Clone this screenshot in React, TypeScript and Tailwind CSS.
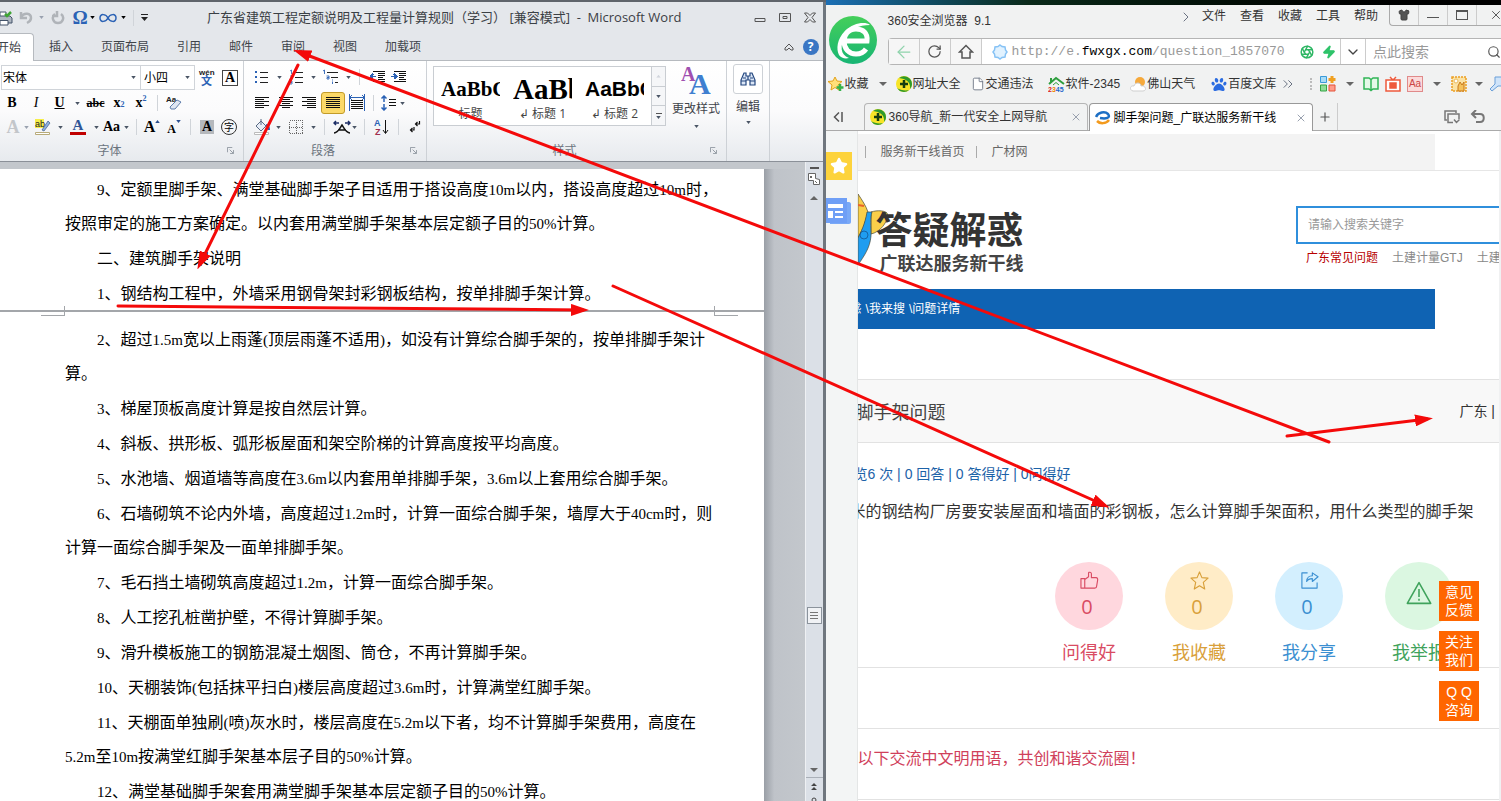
import React from 'react';
import clsx from 'clsx';
import {
  ArrowLeft,
  ChevronDown,
  ChevronRight,
  ChevronsRight,
  Plus,
  RotateCw,
  Search,
  Shirt,
  Star,
  X,
  Zap,
  Aperture,
  File,
} from 'lucide-react';
import { FaPaw } from 'react-icons/fa';

const Caret = ({ className = 'text-gray-600' }: { className?: string }) => (
  <svg viewBox="0 0 6 4" className={clsx('h-[3px] w-[5px] shrink-0', className)} fill="currentColor">
    <path d="M0 0h6L3 4z" />
  </svg>
);

const BigCaret = ({ className }: { className?: string }) => (
  <svg viewBox="0 0 8 4" className={clsx('h-1 w-2 shrink-0', className)} fill="#666">
    <path d="M0 0h8L4 4z" />
  </svg>
);

const Sep = ({ className = 'w-[10px]' }: { className?: string }) => (
  <span className={clsx('flex shrink-0 justify-center', className)}>
    <span className="h-4 w-px bg-[#d0d4d9]" />
  </span>
);

type ToolProps = { label: string; className?: string; children: React.ReactNode };

const Tool = ({ label, className = 'w-6', children }: ToolProps) => (
  <button type="button" aria-label={label} className={clsx('flex h-[22px] shrink-0 items-center justify-center', className)}>
    {children}
  </button>
);

const Lines = ({ rows }: { rows: [number, number][] }) => (
  <svg viewBox="0 0 16 16" className="h-4 w-4" stroke="#111" strokeWidth="1" shapeRendering="crispEdges">
    {rows.map(([a, b], i) => (
      <path key={i} d={`M${a} ${2.5 + i * 2}H${b}`} />
    ))}
  </svg>
);

const Launcher = () => (
  <svg viewBox="0 0 8 8" className="h-[7px] w-[7px]" fill="none" stroke="#8a929b">
    <path d="M.5 6V.5H6M3 3l4 4M7.500 3.500v4h-4" />
  </svg>
);

/* ---------- Word window ---------- */

const WordTitleBar = () => (
  <div className="flex h-[31px] items-center">
    <div className="flex w-[207px] items-center">
      <Tool label="打印" className="w-[13px]">
        <svg viewBox="0 0 13 16" className="h-4 w-[13px]" fill="none" stroke="#44546a">
          <path d="M0 6V2h6v4" fill="#fff" />
          <path d="M-2 6h12l2 2v5H-2z" fill="#aeb6c0" />
          <path d="M0 10.500h8v4.500H0z" fill="#fff" />
          <path d="M5 4l2 2 4-4" stroke="#3fa535" strokeWidth="2.500" />
        </svg>
      </Tool>
      <Tool label="撤消" className="w-[26px]">
        <svg viewBox="0 0 14 14" className="h-[14px] w-[14px]" fill="none" stroke="#b0b4b9" strokeWidth="2.500">
          <path d="M2 1v6h6M2 6c3-5 10-4 10 1 0 2-2 4-4 5" />
        </svg>
      </Tool>
      <Caret className="text-gray-400" />
      <Tool label="重复" className="w-[28px]">
        <svg viewBox="0 0 14 14" className="h-[14px] w-[14px]" fill="none" stroke="#b0b4b9" strokeWidth="2.500">
          <path d="M4 3C0 6 2 12 7 12s7-6 3-9M6 0v5H1" />
        </svg>
      </Tool>
      <Tool label="符号" className="w-[16px]">
        <span className="font-[Liberation_Serif] text-[19px] leading-none font-bold text-[#2b62b5]">Ω</span>
      </Tool>
      <Caret className="ml-[2px] text-black" />
      <Tool label="公式" className="w-[26px]">
        <svg viewBox="0 0 18 10" className="h-[10px] w-[18px]" fill="none" stroke="#2b62b5" strokeWidth="1.500">
          <path d="M9 5C7 1 1 0 1 5s6 4 8 0 8-5 8 0-6 4-8 0z" />
        </svg>
      </Tool>
      <Caret className="text-black" />
      <Sep className="w-[14px]" />
      <Tool label="自定义快速访问工具栏" className="w-2">
        <svg viewBox="0 0 7 7" className="h-[7px] w-[7px]">
          <path d="M0 .5h7" stroke="#222" />
          <path d="M0 3h7L3.500 7z" fill="#222" />
        </svg>
      </Tool>
    </div>
    <h1 className="flex-1 truncate text-[13px] text-[#3b4045]">
      广东省建筑工程定额说明及工程量计算规则（学习） [兼容模式]&nbsp; -&nbsp; Microsoft Word
    </h1>
    <div className="flex items-center gap-[13px] pr-[7px]">
      <button type="button" aria-label="最小化">
        <svg viewBox="0 0 12 12" className="h-3 w-3" fill="none" stroke="#555">
          <path d="M1 6.500h10v3H1z" />
        </svg>
      </button>
      <button type="button" aria-label="还原">
        <svg viewBox="0 0 12 12" className="h-3 w-3" fill="none" stroke="#555">
          <path d="M.5 1.500h11v8H.5zM4 4.500h4v2H4z" />
        </svg>
      </button>
      <button type="button" aria-label="关闭">
        <svg viewBox="0 0 12 12" className="h-3 w-3" fill="none" stroke="#555">
          <path d="M.5 1h3L6 3.500 8.500 1h3L8 5.500l3.500 4.500h-3L6 7.500 3.500 10h-3L4 5.500z" />
        </svg>
      </button>
    </div>
  </div>
);

const ribbonTabs = ['插入', '页面布局', '引用', '邮件', '审阅', '视图', '加载项'];

const WordTabs = () => (
  <nav className="flex h-[28px] border-b border-[#b6babf] text-xs text-[#3f444a]">
    <button type="button" className="-mb-px flex w-[34px] items-center justify-end rounded-tr border-t border-r border-[#b6babf] bg-white pr-3 whitespace-nowrap">
      开始
    </button>
    <div className="flex flex-1 gap-7 pl-[15px]">
      {ribbonTabs.map((t) => (
        <button type="button" key={t}>{t}</button>
      ))}
    </div>
    <div className="flex items-center gap-[9px] pr-1">
      <button type="button" aria-label="功能区最小化">
        <svg viewBox="0 0 10 8" className="h-2 w-[10px]" fill="none" stroke="#555">
          <path d="M1 5l4-4 4 4v2H7L5 5 3 7H1z" />
        </svg>
      </button>
      <button type="button" aria-label="帮助" className="h-4 w-4 rounded-full bg-[#3a76c4] text-xs leading-4 font-bold text-white">?</button>
    </div>
  </nav>
);

type GroupProps = { title?: string; launcher?: boolean; className?: string; children: React.ReactNode };

const Group = ({ title, launcher, className, children }: GroupProps) => (
  <section className={clsx('flex shrink-0 flex-col border-r border-[#cdd1d6]', className)}>
    <div className="flex-1">{children}</div>
    <div className="grid h-[21px] grid-cols-[1fr_16px] items-center text-xs text-[#6b747e]">
      <span className="pr-2 text-center">{title}</span>
      {launcher && <Launcher />}
    </div>
  </section>
);

const FontGroup = () => (
  <Group title="字体" launcher className="w-[244px]">
    <div className="flex items-center pt-[4px]">
      <label className="ml-px flex h-[25px] w-[140px] items-center border border-[#d0d4d9] bg-white pr-[4px]">
        <select aria-label="字体" className="min-w-0 flex-1 appearance-none bg-transparent pl-px text-xs">
          <option>宋体</option>
        </select>
        <Caret />
      </label>
      <label className="-ml-px flex h-[25px] w-[55px] items-center border border-[#d0d4d9] bg-white pr-[4px]">
        <select aria-label="字号" className="min-w-0 flex-1 appearance-none bg-transparent pl-[3px] text-xs">
          <option>小四</option>
        </select>
        <Caret />
      </label>
      <Tool label="拼音指南" className="ml-px w-[22px]">
        <svg viewBox="0 0 18 20" className="h-5 w-[18px]" fontWeight="bold">
          <text x="1" y="7" fontSize="8" fontFamily="Liberation Sans" fill="#222">wén</text>
          <text x="3" y="17" fontSize="11" fontFamily="Noto Sans CJK SC" fill="#2b62b5">文</text>
        </svg>
      </Tool>
      <Tool label="字符边框" className="w-[24px]">
        <span className="h-4 w-4 border border-[#444] text-center font-[Liberation_Serif] text-sm leading-[14px] font-bold">A</span>
      </Tool>
    </div>
    <div className="flex items-center pt-[2px] font-[Liberation_Serif] text-sm font-bold">
      <Tool label="加粗" className="w-6">B</Tool>
      <Tool label="倾斜" className="w-6"><i className="font-normal">I</i></Tool>
      <Tool label="下划线" className="w-[23px]"><u>U</u></Tool>
      <Tool label="下划线样式" className="w-3"><Caret /></Tool>
      <Tool label="删除线" className="w-[25px]"><s className="text-xs">abc</s></Tool>
      <Tool label="下标" className="w-[22px]">x<sub className="text-[8px] text-[#2b62b5]">2</sub></Tool>
      <Tool label="上标" className="w-[22px]">x<sup className="text-[8px] text-[#2b62b5]">2</sup></Tool>
      <Sep />
      <Tool label="清除格式" className="w-6">
        <svg viewBox="0 0 18 16" className="h-4 w-[18px]">
          <text x="1" y="7" fontSize="8" fontFamily="Liberation Sans" fill="#222">Aa</text>
          <path d="M5 12l7-7 4 2-6 7H6z" fill="#dfe6f2" stroke="#5f7dab" />
        </svg>
      </Tool>
    </div>
    <div className="flex items-center pt-[2px] font-[Liberation_Serif] text-sm font-bold">
      <Tool label="文本效果" className="w-[22px]"><span className="pl-1 text-lg text-[#c3c6ca]">A</span></Tool>
      <Tool label="文本效果选项" className="w-[8px]"><Caret className="text-gray-400" /></Tool>
      <Tool label="突出显示" className="w-[26px]">
        <svg viewBox="0 0 18 18" className="h-[18px] w-[18px]">
          <path d="M1 1h9v9H1z" fill="#f6ee4a" />
          <text x="1" y="9" fontSize="9" fontFamily="Liberation Sans" fontWeight="normal" fill="#222">ab</text>
          <path d="M8 12l6-9 2 2-6 8z" fill="#8fb0de" stroke="#3d5c8c" strokeWidth=".7" />
          <path d="M1.500 14.500h14v2h-14z" fill="#fff" stroke="#b8ab7a" />
        </svg>
      </Tool>
      <Tool label="突出显示选项" className="w-[8px]"><Caret /></Tool>
      <Tool label="字体颜色" className="w-[28px]">
        <span className="flex flex-col items-center text-[15px] leading-[13px] text-[#2f5597]">
          A<span className="h-[3px] w-4 bg-[#c00000]" />
        </span>
      </Tool>
      <Tool label="字体颜色选项" className="w-[8px]"><Caret /></Tool>
      <Tool label="更改大小写" className="w-[32px]"><span className="pr-1">Aa</span><Caret /></Tool>
      <Sep className="w-[9px]" />
      <Tool label="增大字体" className="w-[22px]">
        <span className="text-base">A</span>
        <Caret className="mb-3 rotate-180 text-[#2b4f8f]" />
      </Tool>
      <Tool label="缩小字体" className="w-[22px]">
        <span className="pt-1 text-xs">A</span>
        <Caret className="mb-3 text-[#2b4f8f]" />
      </Tool>
      <Sep className="w-[11px]" />
      <Tool label="字符底纹" className="w-[22px]"><span className="h-[14px] w-[14px] bg-[#b5b8bc] text-center leading-[14px]">A</span></Tool>
      <Tool label="带圈字符" className="w-[22px]">
        <span className="h-4 w-4 rounded-full border border-[#333] text-center font-['Noto_Sans_CJK_SC'] text-[10px] leading-[14px] font-normal">字</span>
      </Tool>
    </div>
  </Group>
);

const full: [number, number][] = [[1, 15], [1, 15], [1, 15], [1, 15], [1, 15], [1, 15]];
const leftRows: [number, number][] = [[1, 15], [1, 10], [1, 15], [1, 10], [1, 15], [1, 10]];
const centerRows: [number, number][] = [[1, 15], [4, 12], [1, 15], [4, 12], [1, 15], [4, 12]];
const rightRows: [number, number][] = [[1, 15], [6, 15], [1, 15], [6, 15], [1, 15], [6, 15]];

const IndentIcon = ({ flip }: { flip?: boolean }) => (
  <svg viewBox="0 0 16 16" className="h-4 w-4" fill="none" stroke="#111" shapeRendering="crispEdges">
    <path d="M3 2.500h12M8 4.500h7M8 6.500h7M8 8.500h5M8 10.500h7M3 12.500h12" />
    <path d={flip ? 'M0 7.500h5M3 5l2.500 2.500L3 10' : 'M6 7.500H1M3 5L.5 7.500 3 10'} stroke="#2b62b5" strokeWidth="1.500" />
  </svg>
);

const ParagraphGroup = () => (
  <Group title="段落" launcher className="w-[183px]">
    <div className="flex items-center pt-[5px] pl-[6px]">
      <Tool label="项目符号">
        <svg viewBox="0 0 16 16" className="h-4 w-4" shapeRendering="crispEdges">
          <path d="M1 2h2v2H1zM1 7h2v2H1zM1 12h2v2H1z" fill="#2b62b5" />
          <path d="M6 3.500h8M6 8.500h8M6 13.500h8" stroke="#222" />
        </svg>
      </Tool>
      <Tool label="项目符号选项" className="w-[10px]"><Caret /></Tool>
      <Tool label="编号" className="w-[25px]">
        <svg viewBox="0 0 16 16" className="h-4 w-4">
          <path d="M1 2l1.500-1v4M1 7h2v1.500l-2 2h2M1 12h2v3H1M1 13.500h2" fill="none" stroke="#2b62b5" strokeWidth=".8" />
          <path d="M6 3.500h8M6 8.500h8M6 13.500h8" stroke="#222" shapeRendering="crispEdges" />
        </svg>
      </Tool>
      <Tool label="编号选项" className="w-[8px]"><Caret /></Tool>
      <Tool label="多级列表" className="w-[28px]">
        <svg viewBox="0 0 18 16" className="h-4 w-[18px]">
          <path d="M1 2l1.500-1v4M4.500 7h2.500v3H5V8.500h2M10.500 12.500V15M10.500 10.500v1" fill="none" stroke="#2b62b5" strokeWidth=".9" />
          <path d="M5 3.500h11M9 8.500h7M13 13.500h3" stroke="#222" shapeRendering="crispEdges" />
        </svg>
      </Tool>
      <Tool label="多级列表选项" className="w-[6px]"><Caret /></Tool>
      <Sep className="w-4" />
      <Tool label="减少缩进量" className="w-[21px]"><IndentIcon /></Tool>
      <Tool label="增加缩进量" className="w-[21px]"><IndentIcon flip /></Tool>
    </div>
    <div className="flex items-center pt-[4px] pl-[6px]">
      <Tool label="左对齐"><Lines rows={leftRows} /></Tool>
      <Tool label="居中" className="w-[23px]"><Lines rows={centerRows} /></Tool>
      <Tool label="右对齐"><Lines rows={rightRows} /></Tool>
      <Tool label="两端对齐" className="w-6 rounded-[3px] border border-[#c29b29] bg-[#fbd968]"><Lines rows={full} /></Tool>
      <Tool label="分散对齐" className="w-6">
        <svg viewBox="0 0 16 18" className="h-[18px] w-4" fill="none" shapeRendering="crispEdges">
          <path d="M1 3.500h14M3 1L1 3.500 3 6M13 1l2 2.500L13 6M.5 0v17M15.500 0v17" stroke="#2b62b5" />
          <path d="M2 8.500h12M2 10.500h12M2 12.500h12M2 14.500h12M2 6.500h12" stroke="#111" />
        </svg>
      </Tool>
      <Sep className="w-[9px]" />
      <Tool label="行距" className="w-[22px]">
        <svg viewBox="0 0 18 16" className="h-4 w-[18px]" fill="none">
          <path d="M4 1v6M4 9v6M1.500 3.500L4 1l2.500 2.500M1.500 12.500L4 15l2.500-2.500" stroke="#2b62b5" strokeWidth="1.500" />
          <path d="M9 4.500h7M9 7.500h7M9 10.500h7" stroke="#111" shapeRendering="crispEdges" />
        </svg>
      </Tool>
      <Caret />
    </div>
    <div className="flex items-center pt-[2px] pl-[6px]">
      <Tool label="底纹">
        <svg viewBox="0 0 18 16" className="h-4 w-[18px]" fill="none" stroke="#5a6b85">
          <path d="M3 7l5-5 5 5-5 5z" fill="#e8eef8" />
          <path d="M8 6V0" />
          <path d="M13 6c3 0 3 3 3 5" stroke="#2b62b5" strokeWidth="2" />
          <path d="M1.500 13.500h14v2h-14z" fill="#fff" stroke="#bbb" />
        </svg>
      </Tool>
      <Tool label="底纹选项" className="w-[8px]"><Caret /></Tool>
      <Tool label="边框" className="w-7">
        <svg viewBox="0 0 14 14" className="h-[14px] w-[14px]" fill="none" stroke="#666" strokeDasharray="1 1" shapeRendering="crispEdges">
          <path d="M.5.5h13v13H.5zM7.500 0v14M0 7.500h14" />
        </svg>
      </Tool>
      <Tool label="边框选项" className="w-[6px]"><Caret /></Tool>
      <Sep className="w-[16px]" />
      <Tool label="中文版式" className="w-[20px]">
        <svg viewBox="0 0 18 14" className="h-[14px] w-[18px]" fill="none" stroke="#111" strokeWidth="1.500">
          <path d="M1 13c4 0 6-5 8-8 2 3 4 8 8 8M5 10h8" />
          <path d="M1 3h5M17 3h-5M3 1L1 3l2 2M15 1l2 2-2 2" stroke="#1c2d66" />
        </svg>
      </Tool>
      <Caret />
      <Sep className="w-[15px]" />
      <Tool label="排序" className="w-[20px]">
        <svg viewBox="0 0 16 18" className="h-[18px] w-4" fontSize="9" fontWeight="bold" fontFamily="Liberation Sans">
          <text x="0" y="8" fill="#2b62b5">A</text>
          <text x="1" y="17" fill="#a03050">Z</text>
          <path d="M11.500 2v13M9 12l2.500 3.500L14 12" fill="none" stroke="#111" />
        </svg>
      </Tool>
      <Sep className="w-[12px]" />
      <Tool label="显示编辑标记" className="w-[22px]">
        <svg viewBox="0 0 12 12" className="h-3 w-3" fill="none" stroke="#111" strokeWidth="1.200">
          <path d="M10.500 0v3H6.500M8.500 1l-2 2 2 2M5 6v3H1.500M3.500 7l-2 2 2 2" />
        </svg>
      </Tool>
    </div>
  </Group>
);

const styleItems = [
  { sample: 'AaBbC', name: '标题', font: 'font-[Liberation_Serif] text-[21px]' },
  { sample: 'AaBb', name: '↲ 标题 1', font: 'font-[Liberation_Serif] text-[29px]' },
  { sample: 'AaBbC', name: '↲ 标题 2', font: 'font-[Liberation_Sans] text-[21px]' },
];

const StylesGroup = () => (
  <Group title="样式" launcher className="w-[300px]">
    <div className="flex pt-[5px] pl-[6px]">
      <div className="flex h-[60px] w-[233px] border border-[#c9cdd2] bg-white">
        <div className="flex flex-1 gap-[13px] pl-[7px]">
          {styleItems.map((s) => (
            <button type="button" key={s.name} className="w-[59px]">
              <span className={clsx('block h-[35px] overflow-hidden text-left leading-[38px] font-bold', s.font)}>{s.sample}</span>
              <span className="block text-xs leading-[18px] text-[#444]">{s.name}</span>
            </button>
          ))}
        </div>
        <div className="flex w-[14px] flex-col border-l border-[#c9cdd2] bg-[#f5f6f8]">
          <button type="button" aria-label="上一行" className="flex flex-1 rotate-180 items-center justify-center"><Caret className="text-gray-300" /></button>
          <button type="button" aria-label="下一行" className="flex flex-1 items-center justify-center border-y border-[#c9cdd2]"><Caret /></button>
          <button type="button" aria-label="其他" className="flex flex-1 flex-col items-center justify-center gap-[2px]">
            <span className="h-px w-[6px] bg-[#555]" />
            <Caret />
          </button>
        </div>
      </div>
      <button type="button" className="flex flex-1 flex-col items-center text-xs text-[#3f444a]">
        <svg viewBox="0 0 30 30" className="h-[30px] w-[30px]" fontFamily="Liberation Serif" fontWeight="bold">
          <text x="0" y="15" fontSize="20" fill="#a04fb0">A</text>
          <text x="8" y="28" fontSize="30" fill="#3f7fd0">A</text>
        </svg>
        <span className="pt-[5px] pb-2">更改样式</span>
        <Caret />
      </button>
    </div>
  </Group>
);

const EditGroup = () => (
  <Group className="w-[43px]">
    <button type="button" className="flex w-full flex-col items-center pt-[3px] text-xs text-[#3f444a]">
      <span className="flex h-[30px] w-[30px] items-center justify-center rounded-[3px] border border-[#cdd1d6] bg-white">
        <svg viewBox="0 0 16 14" className="h-[14px] w-4" fill="#dbe6f6" stroke="#24477f" strokeWidth="1.200">
          <path d="M4 1h2v3h4V1h2l3 7v5h-5V8H6v5H1V8zM1 9h5M10 9h5M8 4v4M3 6h3M10 6h3" />
        </svg>
      </span>
      <span className="pt-[5px] pb-[6px]">编辑</span>
      <Caret />
    </button>
  </Group>
);

const PageBreak = () => (
  <div className="relative h-[11px]">
    <div className="h-[2px] bg-[#a3a6aa]" />
    <span className="absolute -top-1 left-[41px] h-[10px] w-6 border-r border-b border-[#a3a6aa]" />
    <span className="absolute -top-1 right-[26px] h-[10px] w-6 border-b border-l border-[#a3a6aa]" />
  </div>
);

const firstPage = [
  ['9、定额里脚手架、满堂基础脚手架子目适用于搭设高度10m以内，搭设高度超过10m时，', '按照审定的施工方案确定。以内套用满堂脚手架基本层定额子目的50%计算。'],
  ['二、建筑脚手架说明'],
  ['1、钢结构工程中，外墙采用钢骨架封彩钢板结构，按单排脚手架计算。'],
];

const secondPage = [
  ['2、超过1.5m宽以上雨蓬(顶层雨蓬不适用)，如没有计算综合脚手架的，按单排脚手架计', '算。'],
  ['3、梯屋顶板高度计算是按自然层计算。'],
  ['4、斜板、拱形板、弧形板屋面和架空阶梯的计算高度按平均高度。'],
  ['5、水池墙、烟道墙等高度在3.6m以内套用单排脚手架，3.6m以上套用综合脚手架。'],
  ['6、石墙砌筑不论内外墙，高度超过1.2m时，计算一面综合脚手架，墙厚大于40cm时，则', '计算一面综合脚手架及一面单排脚手架。'],
  ['7、毛石挡土墙砌筑高度超过1.2m，计算一面综合脚手架。'],
  ['8、人工挖孔桩凿护壁，不得计算脚手架。'],
  ['9、滑升模板施工的钢筋混凝土烟图、筒仓，不再计算脚手架。'],
  ['10、天棚装饰(包括抹平扫白)楼层高度超过3.6m时，计算满堂红脚手架。'],
  ['11、天棚面单独刷(喷)灰水时，楼层高度在5.2m以下者，均不计算脚手架费用，高度在', '5.2m至10m按满堂红脚手架基本层子目的50%计算。'],
  ['12、满堂基础脚手架套用满堂脚手架基本层定额子目的50%计算。'],
];

// half-width characters are set in a serif about half as wide as a Chinese glyph
const MixedText = ({ text }: { text: string }) => (
  <>
    {text.split(/([\x21-\x7e]+)/).map((part, i) =>
      i % 2 ? <span key={i} className="font-[Liberation_Serif] text-[15px] leading-none">{part}</span> : part
    )}
  </>
);

const Paragraphs = ({ items }: { items: string[][] }) => (
  <div className="pl-[65px]">
    {items.map((lines) => (
      <p key={lines[0]} className="mb-px indent-8 leading-[34px] whitespace-nowrap">
        {lines.map((line, i) => (
          <React.Fragment key={line}>
            {i > 0 && <br />}
            <MixedText text={line} />
          </React.Fragment>
        ))}
      </p>
    ))}
  </div>
);

const WordScrollbar = () => (
  <div className="flex w-[18px] shrink-0 flex-col items-center border-l border-[#eef0f3] bg-[#dbe0e7]">
    <button type="button" aria-label="拆分" className="mt-[5px] h-[2px] w-[9px] bg-[#555]" />
    <button type="button" aria-label="标尺" className="mt-1">
      <svg viewBox="0 0 12 12" className="h-3 w-3" fill="#fff" stroke="#666">
        <path d="M.5.5h7v5l4 1v5h-6v-4h-5zM2 3l2 2M4 3L2 5M7 8l2 2" />
      </svg>
    </button>
    <BigCaret className="mt-[11px] rotate-180" />
    <div className="flex-[412]" />
    <button type="button" aria-label="滚动" className="flex h-[17px] w-[15px] flex-col items-center justify-center gap-[2px] border border-[#8b939c] bg-[#f0f2f5]">
      <span className="h-px w-2 bg-[#777]" />
      <span className="h-px w-2 bg-[#777]" />
      <span className="h-px w-2 bg-[#777]" />
    </button>
    <div className="flex-[146]" />
    <BigCaret />
    <button type="button" aria-label="前一页" className="mt-[5px] h-6 w-full border-t border-[#aab0b8] pt-[5px]">
      <svg viewBox="0 0 6 18" className="mx-auto h-[18px] w-[6px]" fill="#444">
        <path d="M0 3l3-3 3 3zM0 7l3-3 3 3z" />
        <circle cx="3" cy="17" r="2" fill="none" stroke="#444" />
      </svg>
    </button>
  </div>
);

const WordWindow = () => (
  <div className="flex h-full min-w-0 flex-col overflow-hidden border-t-2 border-[#5f646b] bg-[#e4e7eb]">
    <div className="border-r-[3px] border-[#6f767e]">
      <WordTitleBar />
      <WordTabs />
      <div className="flex h-[101px] overflow-hidden border-b border-[#8b9098] bg-linear-to-b from-white via-[#fbfbfc] to-[#e7eaee]">
        <FontGroup />
        <ParagraphGroup />
        <StylesGroup />
        <EditGroup />
      </div>
    </div>
    <div className="flex min-h-0 flex-1 border-r-[3px] border-[#6f767e]">
      <div className="flex min-w-0 flex-1 bg-[#c3c7cc] pt-[7px]">
        <main className="min-w-0 flex-1 overflow-hidden bg-white pt-[2px] font-['Noto_Sans_CJK_SC',sans-serif] text-base text-black">
          <Paragraphs items={firstPage} />
          <PageBreak />
          <Paragraphs items={secondPage} />
        </main>
        <div className="w-[41px] shrink-0 bg-linear-to-r from-[#9a9fa6] via-[#bfc3c9] via-25% to-[#c3c7cc]" />
      </div>
      <WordScrollbar />
    </div>
  </div>
);

/* ---------- Browser window ---------- */

const NavIcon = () => (
  <svg viewBox="0 0 16 16" className="h-4 w-4 shrink-0">
    <circle cx="8" cy="8" r="8" fill="#f7e427" />
    <path d="M3 2a8 8 0 0 1 13 6c0 2-1 4-2 5C15 7 11 3 3 2z" fill="#2f9a2c" />
    <path d="M13 14a8 8 0 0 1-12-2c3 2 8 3 12 2z" fill="#2f9a2c" />
    <path d="M8 4v8M4 8h8" stroke="#153d10" strokeWidth="2.500" />
  </svg>
);

const HouseIcon = () => (
  <svg viewBox="0 0 17 16" className="h-4 w-[17px]" fill="none">
    <path d="M1 8l7-6 8 6M3 2v4" stroke="#2e9e3e" strokeWidth="2" />
    <path d="M5 9l3-2.500L11 9" stroke="#2e9e3e" />
    <text x="0" y="16" fontSize="7" fontWeight="bold" fontFamily="Liberation Sans">
      <tspan fill="#d22">2</tspan><tspan fill="#e80">3</tspan><tspan fill="#26c">4</tspan><tspan fill="#26c">5</tspan>
    </text>
  </svg>
);

const WeatherIcon = () => (
  <svg viewBox="0 0 16 16" className="h-4 w-4">
    <circle cx="10" cy="6" r="5" fill="#f6a93b" />
    <path d="M3 15c-4-1-3-6 1-5 1-4 7-4 7 0 5-1 6 5 2 5z" fill="#fff" stroke="#cfcfcf" />
  </svg>
);

const StarPlus = () => (
  <svg viewBox="0 0 16 16" className="h-4 w-4">
    <path d="M7 1l2 4 5 .5-4 3.500 1 5-4-2.500L3 14l1-5L0 5.500 5 5z" fill="#ffe07a" stroke="#e3a21a" />
    <path d="M12 8v7M8.500 11.500h7" stroke="#35b24a" strokeWidth="2.500" />
  </svg>
);

const SwirlIcon = () => (
  <svg viewBox="0 0 16 14" className="h-[14px] w-4" fill="none" strokeWidth="2.500">
    <path d="M1 6C3 1 10 0 13 3c3 4-2 5-8 4" stroke="#1d6fc4" />
    <path d="M2 10c3 3 9 3 12-1" stroke="#f39a1d" />
  </svg>
);

const menus = ['文件', '查看', '收藏', '工具', '帮助'];

const bookmarks = [
  { name: '网址大全', icon: <NavIcon />, gap: 'mr-[10px]' },
  { name: '交通违法', icon: <File className="h-[14px] w-[14px] fill-white text-gray-500" strokeWidth={1.5} />, gap: 'mr-[14px]' },
  { name: '软件-2345', icon: <HouseIcon />, gap: 'mr-[10px]' },
  { name: '佛山天气', icon: <WeatherIcon />, gap: 'mr-4' },
  { name: '百度文库', icon: <FaPaw className="h-[15px] w-4 text-[#2a6be0]" />, gap: 'mr-1' },
];

const BrowserLogo = () => (
  <svg viewBox="0 0 48 48" className="h-12 w-12" fill="none">
    <defs>
      <linearGradient id="logo" x2="0" y2="1">
        <stop stopColor="#45cf5a" />
        <stop offset="1" stopColor="#17b574" />
      </linearGradient>
    </defs>
    <circle cx="24" cy="24" r="24" fill="url(#logo)" />
    <path d="M15 25h23c1-8-4-12-11-12-8 0-12 6-12 12 0 8 5 13 12 13 5 0 8-2 10-5" stroke="#fff" strokeWidth="5" />
    <path d="M41 9C36 5 24 7 16 15S7 33 10 39c2 3 6 4 10 3C11 39 11 29 16 21S30 9 41 9z" fill="#fff" />
  </svg>
);

const navButton = 'flex w-[31px] shrink-0 items-center justify-center border-r border-[#ccc] bg-[#f6f6f6]';
const winButton = 'flex w-[29px] shrink-0 items-center justify-center border-r border-[#ccc]';

const BrowserHeader = () => (
  <header className="bg-[#f1f2f2] text-xs text-[#333]">
    <div className="flex">
      <div className="w-[62px] shrink-0 pt-[11px] pl-[3px]"><BrowserLogo /></div>
      <div className="min-w-0 flex-1">
        <div className="flex h-[33px]">
          <span className="flex-1 pt-2">360安全浏览器&nbsp; 9.1</span>
          <nav className="flex items-start gap-[14px] pt-[2px] pr-[11px]">
            <ChevronRight className="-mr-[6px] mt-[2px] h-4 w-4 text-gray-500" strokeWidth={1.5} />
            {menus.map((m) => (
              <button type="button" key={m} className="h-[18px]">{m}</button>
            ))}
          </nav>
          <div className="flex h-[21px] w-[112px] overflow-hidden rounded-bl border-b border-l border-[#aaa] text-[#444]">
            <button type="button" aria-label="皮肤" className={winButton}><Shirt className="h-3 w-3 fill-[#555]" /></button>
            <button type="button" aria-label="最小化" className={winButton}><span className="mt-1 h-px w-3 bg-[#555]" /></button>
            <button type="button" aria-label="最大化" className={winButton}><span className="h-[10px] w-3 border border-t-2 border-[#555]" /></button>
            <button type="button" aria-label="关闭" className="flex flex-1 items-center justify-center pl-3"><X className="h-[14px] w-[14px] shrink-0" strokeWidth={1.5} /></button>
          </div>
        </div>
        <div className="flex h-[27px] rounded-l border border-r-0 border-[#b5b5b5] bg-white">
          <button type="button" aria-label="后退" className={navButton}><ArrowLeft className="h-5 w-5 text-[#8fd3ac]" strokeWidth={1.5} /></button>
          <button type="button" aria-label="刷新" className={navButton}><RotateCw className="h-[15px] w-[15px] text-[#555]" /></button>
          <button type="button" aria-label="主页" className={navButton}>
            <svg viewBox="0 0 16 16" className="h-4 w-4" fill="none" stroke="#555" strokeWidth="1.500">
              <path d="M8 1.500L1.500 8H4v6h8V8h2.500z" />
            </svg>
          </button>
          <div className="flex min-w-0 flex-1 items-center gap-1 pl-[10px]">
            <svg viewBox="0 0 16 16" className="h-4 w-4 shrink-0" fill="#e1f2ff" stroke="#86c2f5" strokeWidth="1.500">
              <path d="M8 1l2 1.500L13 3l.5 3L15 8l-1.500 2-.5 3-3 .5L8 15l-2-1.500L3 13l-.5-3L1 8l1.500-2L3 3l3-.5z" />
            </svg>
            <span className="flex-1 overflow-hidden font-[Liberation_Mono] text-[13px] whitespace-nowrap text-[#999]">
              http://e.<span className="text-black">fwxgx.com</span>/question_1857070
            </span>
            <Aperture className="h-[14px] w-[14px] shrink-0 text-[#2fb765]" strokeWidth={2.5} />
            <Zap className="mx-1 h-[14px] w-[14px] shrink-0 fill-[#2fc36a] text-[#2fc36a]" />
          </div>
          <button type="button" aria-label="历史" className="flex w-[26px] shrink-0 items-center justify-center border-x border-[#ccc]"><ChevronDown className="h-4 w-4 text-[#444]" /></button>
          <label className="flex w-[135px] shrink-0 items-center pl-[7px]">
            <input aria-label="搜索" placeholder="点此搜索" className="min-w-0 flex-1 text-sm outline-none placeholder:text-[#999]" />
            <Search className="h-[14px] w-[14px] shrink-0 text-[#555]" />
          </label>
        </div>
      </div>
    </div>
    <div className="flex h-[38px] items-center overflow-hidden pl-[2px] whitespace-nowrap">
      <button type="button" className="mr-[10px] flex items-center gap-px"><StarPlus />收藏</button>
      <BigCaret className="mr-[9px]" />
      {bookmarks.map((b) => (
        <a key={b.name} href="#" className={clsx('flex shrink-0 items-center gap-px', b.gap)}>
          {b.icon}
          {b.name}
        </a>
      ))}
      <ChevronsRight className="h-4 w-4 shrink-0 text-gray-500" strokeWidth={1.5} />
      <div className="flex flex-1 items-center justify-end gap-[6px]">
        <span className="w-[3px] border-l-2 border-dotted border-[#bbb] pt-3" />
        <svg viewBox="0 0 16 16" className="mx-px h-4 w-4 shrink-0" strokeWidth="1">
          <path d="M.5.5h6v6h-6z" fill="#a9dcf7" stroke="#3a9ad9" />
          <path d="M.5 9h6v6h-6z" fill="#8fdc98" stroke="#35a546" />
          <path d="M9 9h6v6H9z" fill="#ff9d8a" stroke="#e4523a" />
          <path d="M12 0v7M8.500 3.500h7" stroke="#f0a020" strokeWidth="3" />
        </svg>
        <BigCaret className="mx-[3px]" />
        <svg viewBox="0 0 16 16" className="h-4 w-4 shrink-0" fill="#e4f9e8" stroke="#31b557" strokeWidth="1.500">
          <path d="M1 2h5l2 1.500L10 2h5v11h-5l-2 1.500L6 13H1zM8 3.500v11" />
        </svg>
        <svg viewBox="0 0 16 16" className="h-4 w-4 shrink-0" fill="#fff" stroke="#ee5a3c" strokeWidth="1.500">
          <path d="M1 4h14v11H1zM5 1l3 3 3-3" />
          <path d="M5 7h6v5H5z" fill="#ee5a3c" />
        </svg>
        <span className="h-4 w-4 shrink-0 border border-[#e08a8a] bg-[#fbdada] text-center text-[10px] leading-[14px] text-[#c44]">Aa</span>
        <BigCaret className="mx-1" />
        <svg viewBox="0 0 16 16" className="h-4 w-4 shrink-0">
          <path d="M1 1h14v14H1z" fill="#fbe3a5" stroke="#eb9f22" strokeDasharray="2 1" strokeWidth="1.500" />
          <circle cx="5" cy="5" r="2" fill="#fff" stroke="#e9b85a" />
          <path d="M7 15v-5l2-4 2 3 2-3v9z" fill="#f5c25c" stroke="#c8791b" />
        </svg>
        <BigCaret className="ml-[2px]" />
        <svg viewBox="0 0 12 16" className="h-4 w-3 shrink-0" fill="#cfe4fa" stroke="#6a9fd8">
          <path d="M12 1H6v7l-5 5 2 2 6-5h3" />
        </svg>
      </div>
    </div>
    <div className="flex h-7 items-end border-b border-[#aaa]">
      <button type="button" aria-label="侧栏" className="flex h-full w-[38px] items-center justify-start pl-[7px]">
        <svg viewBox="0 0 10 10" className="h-[10px] w-[10px]" fill="none" stroke="#555" strokeWidth="1.500">
          <path d="M6 .5L1.500 5 6 9.500M9 0v10" />
        </svg>
      </button>
      <div className="flex h-[27px] w-[224px] items-center rounded-t border border-b-0 border-[#b5b5b5] pr-[5px] pl-[5px]">
        <NavIcon />
        <span className="flex-1 truncate pl-[3px]">360导航_新一代安全上网导航</span>
        <button type="button" aria-label="关闭标签"><X className="h-3 w-3 text-gray-400" /></button>
      </div>
      <div className="-mb-px ml-px flex h-7 w-[224px] items-center rounded-t border border-b-0 border-[#999] bg-white pr-[5px] pl-[5px] text-black">
        <SwirlIcon />
        <span className="flex-1 truncate pl-[3px]">脚手架问题_广联达服务新干线</span>
        <button type="button" aria-label="关闭标签"><X className="h-3 w-3 text-gray-400" /></button>
      </div>
      <button type="button" aria-label="新标签" className="flex h-full w-[25px] items-center justify-center border-r border-[#ccc]"><Plus className="h-[14px] w-[14px] text-[#555]" /></button>
      <div className="flex h-full flex-1 items-center justify-end gap-[10px] pr-[15px] text-[#777]">
        <svg viewBox="0 0 16 14" className="h-[14px] w-4" fill="none" stroke="currentColor" strokeWidth="1.500">
          <path d="M3 10H1V1h11v2M9 12.500H4V4h11v5M10 9.500l2.500 3 3-3" />
        </svg>
        <svg viewBox="0 0 16 14" className="h-[14px] w-4" fill="none" stroke="currentColor" strokeWidth="2">
          <path d="M6 0L2 4l4 4M2 4h8c5 0 5 8 0 8H6" />
        </svg>
      </div>
    </div>
  </header>
);

const Mascot = () => (
  <svg viewBox="0 0 30 72" className="h-[72px] w-[30px] shrink-0" stroke="#4a4a3a" strokeWidth=".7">
    <path d="M0 0c4 6 8 12 10 18L6 32 0 44z" fill="#f9cf4a" />
    <path d="M13 18c6-2 16-2 17 3-1 8-8 17-17 19z" fill="#f9cf4a" />
    <path d="M0 44c3-6 7-14 9-26h5c-2 6-1 14-1 24-1 12-7 20-13 29z" fill="#1f9df0" />
    <circle cx="6" cy="41" r="4" fill="none" stroke="#134e86" />
    <path d="M0 11l6 1" stroke="#e7642a" strokeWidth="2" />
  </svg>
);

const SiteHeader = () => (
  <>
    <div className="border-b border-[#e6e6e6] pt-[3px]">
      <div className="mr-16 flex h-9 items-center bg-[#f3f3f3] pl-[15px] text-xs text-[#666]">
        <span className="h-3 w-px bg-[#aaa]" />
        <a href="#" className="pl-[15px]">服务新干线首页</a>
        <span className="mx-[11px] h-3 w-px bg-[#aaa]" />
        <a href="#" className="pl-1">广材网</a>
      </div>
    </div>
    <div className="flex h-[118px] justify-between">
      <div className="flex pt-[23px] pl-2">
        <Mascot />
        <div className="-ml-[12px] pt-[15px] font-bold whitespace-nowrap text-[#333]">
          <div className="text-[37px] leading-[46px]">答疑解惑</div>
          <div className="pl-1 text-lg leading-[18px] text-[#444]">广联达服务新干线</div>
        </div>
      </div>
      <div className="w-[203px] pt-[35px] text-xs whitespace-nowrap">
        <input aria-label="搜索关键字" placeholder="请输入搜索关键字" className="h-[38px] w-full border-2 border-r-0 border-[#2f8fdc] pl-[10px] outline-none placeholder:text-[#999]" />
        <div className="flex gap-[14px] overflow-hidden pt-1 pl-[10px] leading-5 text-[#888]">
          <a href="#" className="text-[#b80000]">广东常见问题</a>
          <a href="#">土建计量GTJ</a>
          <a href="#">土建</a>
        </div>
      </div>
    </div>
    <nav className="mr-16 flex h-10 items-center gap-1 bg-[#0f63b3] text-xs text-white">
      <a href="#">惑</a>
      <a href="#">\我来搜</a>
      <a href="#">\问题详情</a>
    </nav>
  </>
);

const actions = [
  {
    label: '问得好',
    count: '0',
    circle: 'bg-[#ffd7de]',
    text: 'text-[#d94b63]',
    icon: <path d="M1 8h4v10H1zM5 9l4-3V2c0-1 3-1 3 1v4h5c1 0 2 1 1.500 3l-1 6c0 1-1 2-2 2H5" />,
  },
  {
    label: '我收藏',
    count: '0',
    circle: 'bg-[#ffecc7]',
    text: 'text-[#d9a03a]',
    icon: <path d="M10 1l2.500 6 6.500.5-5 4.500 1.500 7L10 15.500 4.500 19 6 12 1 7.500 7.500 7z" />,
  },
  {
    label: '我分享',
    count: '0',
    circle: 'bg-[#d3effe]',
    text: 'text-[#3b8fd1]',
    icon: <path d="M8 2H2v16h16v-6M7 11c0-4 3-6 6-6V2l6 4-6 5V8c-3 0-5 1-6 3z" />,
  },
  {
    label: '我举报',
    count: '',
    circle: 'bg-[#dbf7e1]',
    text: 'text-[#3fa35c]',
    icon: <path d="M10 2L1 18h18zM10 7v6M10 14.500v1.500" />,
  },
];

const floating = [['意见', '反馈'], ['关注', '我们'], ['Q Q', '咨询']];

const QuestionPage = () => (
  <div className="relative min-w-0 flex-1 overflow-hidden border-r-2 border-[#f0f1f2] bg-white">
    {/* page is scrolled a few pixels to the right */}
    <div className="-ml-2">
      <SiteHeader />
      <div className="mt-[50px] flex h-16 items-center justify-between border-y border-[#e2e2e2] bg-[#f8f8f8] pr-1 pl-[6px]">
        <h2 className="pt-1 text-lg text-[#444]">脚手架问题</h2>
        <span className="text-sm text-[#333]">广东 |</span>
      </div>
      <p className="pt-[19px] pl-1 text-sm leading-6 whitespace-nowrap text-[#1c62a8]">览6 次 | 0 回答 | 0 答得好 | 0问得好</p>
      <p className="mt-[14px] text-base leading-6 whitespace-nowrap text-[#333]">
        米的钢结构厂房要安装屋面和墙面的彩钢板，怎么计算脚手架面积，用什么类型的脚手架
      </p>
      <div className="mt-[38px] flex justify-end border-b border-[#e2e2e2] pr-[25px]">
        {actions.map((a) => (
          <button type="button" key={a.label} className={clsx('flex w-[110px] flex-col items-center', a.text)}>
            <span className={clsx('flex h-[68px] w-[68px] flex-col items-center rounded-full', a.circle, a.count ? 'pt-[9px]' : 'pt-[18px]')}>
              <svg viewBox="0 0 20 20" className={a.count ? 'h-[19px] w-[19px]' : 'h-[26px] w-[26px]'} fill="none" stroke="currentColor" strokeWidth="1.200" strokeLinejoin="round">
                {a.icon}
              </svg>
              <span className="pr-1 font-[Open_Sans] text-xl leading-[34px]">{a.count}</span>
            </span>
            <span className="mt-[9px] text-lg leading-7">{a.label}</span>
          </button>
        ))}
      </div>
      <div className="h-[61px] border-b border-[#e2e2e2]" />
      <p className="border-b border-[#e2e2e2] pb-[10px] pl-2 text-base leading-[60px] text-[#d0405a]">以下交流中文明用语，共创和谐交流圈！</p>
    </div>
    <div className="absolute top-[450px] right-5 flex flex-col gap-[10px]">
      {floating.map(([a, b]) => (
        <button type="button" key={b} className="h-10 w-10 bg-[#ff6600] text-sm leading-[18px] text-white">
          {a}
          <br />
          {b}
        </button>
      ))}
    </div>
  </div>
);

const BrowserWindow = () => (
  <div className="flex h-full min-w-0 flex-col overflow-hidden font-['Liberation_Sans','Noto_Sans_CJK_SC',sans-serif]">
    <div className="h-[5px] shrink-0 bg-linear-to-r from-[#1c6fb5] via-[#0b2a1a] via-30% to-black" />
    <BrowserHeader />
    <div className="flex min-h-0 flex-1">
      <aside className="flex w-8 shrink-0 flex-col border-r border-[#e4e6e6] bg-[#f3f5f5] pt-[21px]">
        <button type="button" aria-label="收藏夹" className="flex h-7 w-[26px] items-center justify-center bg-[#fdd33c]">
          <Star className="h-[18px] w-[18px] fill-white text-white" />
        </button>
        <button type="button" aria-label="新闻" className="mt-[18px]">
          <svg viewBox="0 0 25 26" className="h-[26px] w-[25px]">
            <path d="M4 4h19c1 0 2 1 2 2v18c0 1-1 2-2 2H4z" fill="#79a9f7" />
            <path d="M0 0h21v25H0z" fill="#6f9ff6" />
            <path d="M2 6h15v4H2zM2 13h5v7H2zM9 13h8v2H9zM9 18h8v2H9z" fill="#fff" />
          </svg>
        </button>
      </aside>
      <QuestionPage />
    </div>
  </div>
);

/* ---------- Red annotation arrows ---------- */

const arrows = [
  { from: [298, 65], to: [200, 264] },
  { from: [1329, 442], to: [299, 52] },
  { from: [118, 306], to: [583, 310] },
  { from: [613, 286], to: [1104, 505] },
  { from: [1287, 436], to: [1427, 419] },
];

const Annotations = () => (
  <svg viewBox="0 0 1501 801" preserveAspectRatio="xMinYMin" className="pointer-events-none absolute inset-0 h-full w-full">
    <defs>
      <marker id="head" viewBox="0 0 18 12" refX="12" refY="6" markerWidth="18" markerHeight="12" markerUnits="userSpaceOnUse" orient="auto">
        <path d="M0 0l18 6-18 6z" fill="#f40a0a" />
      </marker>
    </defs>
    {arrows.map(({ from, to }) => (
      <path key={from.join()} d={`M${from.join(' ')}L${to.join(' ')}`} stroke="#f40a0a" strokeWidth="3" strokeLinecap="round" markerEnd="url(#head)" />
    ))}
  </svg>
);

export default function App() {
  return (
    <div className="relative grid h-screen grid-cols-[55fr_45fr] grid-rows-1 overflow-hidden font-['Open_Sans','Noto_Sans_CJK_SC',sans-serif]">
      <WordWindow />
      <BrowserWindow />
      <Annotations />
    </div>
  );
}
